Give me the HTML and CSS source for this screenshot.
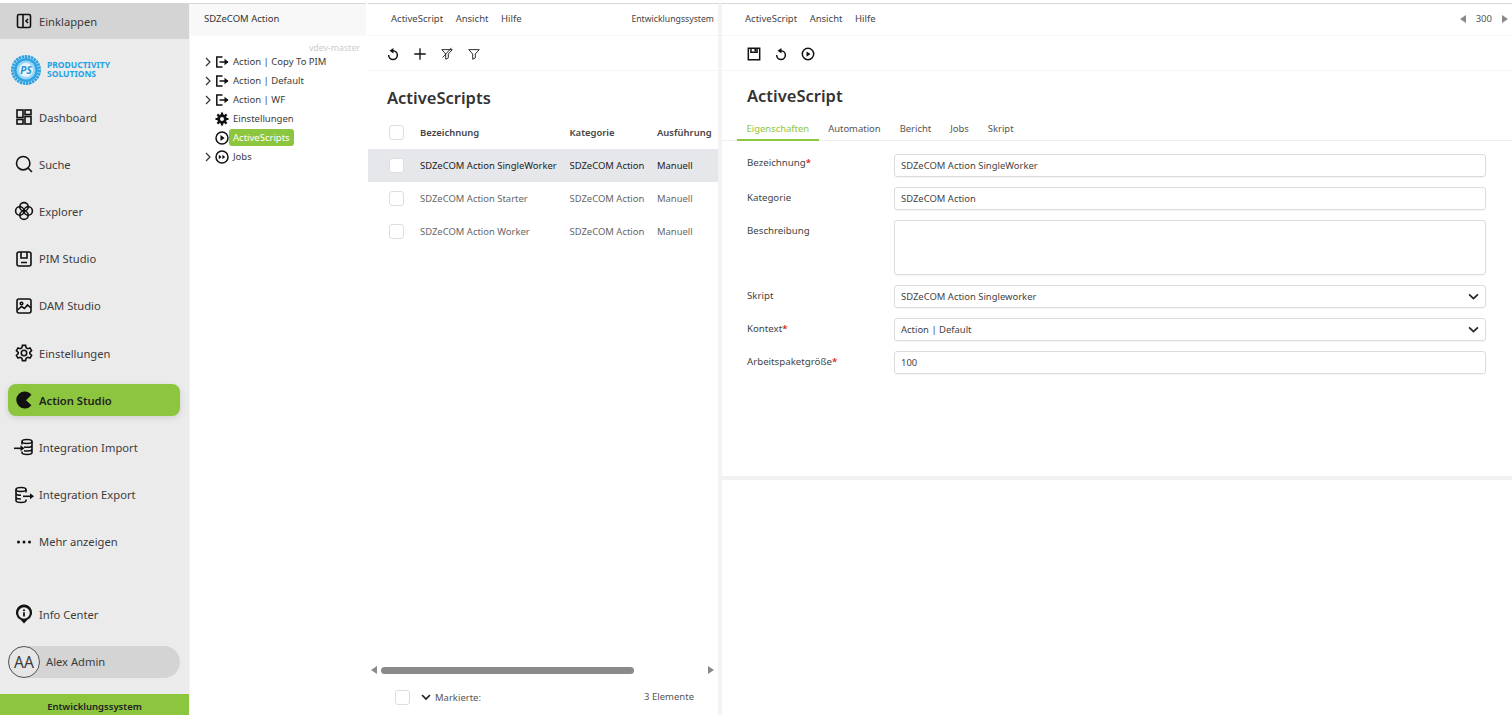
FILE: index.html
```html
<!DOCTYPE html>
<html lang="de">
<head>
<meta charset="utf-8">
<title>Action Studio</title>
<link rel="stylesheet" href="styles.css">
</head>
<body>
<div class="app">
  <aside class="sidebar">
    <div class="collapse">
      <svg class="nav-icon" viewBox="0 0 20 20"><rect x="3.500" y="3.500" width="13" height="13" rx="1.500"/><path d="M9 3.500v13M14 8l-2 2 2 2"/></svg>
      <span>Einklappen</span>
    </div>
    <div class="logo">
      <svg class="logo-mark" viewBox="0 0 30 30"><circle class="logo-edge" cx="15" cy="15" r="13.500"/><circle class="logo-ring" cx="15" cy="15" r="12"/><circle class="logo-mid" cx="15" cy="15" r="9.500"/><circle class="logo-core" cx="15" cy="15" r="7"/><text x="15" y="18.800" text-anchor="middle" class="logo-ps">PS</text></svg>
      <div class="logo-text">PRODUCTIVITY<br>SOLUTIONS</div>
    </div>
    <nav class="nav">
      <a class="nav-item"><svg class="nav-icon" viewBox="0 0 20 20"><rect x="3" y="3" width="6" height="7.500"/><rect x="11" y="3" width="6" height="4.500"/><rect x="3" y="12.500" width="6" height="4.500"/><rect x="11" y="9.500" width="6" height="7.500"/></svg><span>Dashboard</span></a>
      <a class="nav-item"><svg class="nav-icon" viewBox="0 0 20 20"><circle cx="9.200" cy="9.200" r="6.700"/><path d="m14 14 4 4"/></svg><span>Suche</span></a>
      <a class="nav-item"><svg class="nav-icon" viewBox="0 0 20 20"><circle cx="10" cy="5.800" r="4.200"/><circle cx="14.200" cy="10" r="4.200"/><circle cx="10" cy="14.200" r="4.200"/><circle cx="5.800" cy="10" r="4.200"/></svg><span>Explorer</span></a>
      <a class="nav-item"><svg class="nav-icon" viewBox="0 0 20 20"><rect x="3" y="3" width="14" height="14" rx="2"/><path d="M7 3v6h6V3M7 13.500h6"/></svg><span>PIM Studio</span></a>
      <a class="nav-item"><svg class="nav-icon" viewBox="0 0 20 20"><rect x="3" y="3" width="14" height="14" rx="2"/><circle cx="7.500" cy="7.500" r="1.300"/><path d="m3.500 14 4-3.500 3 2 3-3.500 3.500 3"/></svg><span>DAM Studio</span></a>
      <a class="nav-item"><svg class="nav-icon" viewBox="0 0 20 20"><circle cx="10" cy="10" r="2.700"/><path d="M8.400 2.400h3.200l.5 2.400 1.600.9 2.300-.8 1.600 2.800-1.800 1.600v1.400l1.800 1.600-1.600 2.800-2.300-.8-1.600.9-.5 2.400H8.400l-.5-2.400-1.600-.9-2.300.8-1.600-2.800 1.800-1.600V9.300l-1.800-1.600 1.600-2.800 2.300.8 1.600-.9z"/></svg><span>Einstellungen</span></a>
      <a class="nav-item active"><svg class="nav-icon" viewBox="0 0 20 20"><path class="solid" d="M17.500 4.800A8.500 8.500 0 1 0 17.500 15.200L12 10.300z"/></svg><span>Action Studio</span></a>
      <a class="nav-item"><svg class="nav-icon" viewBox="0 0 20 20"><ellipse cx="13" cy="4.500" rx="5" ry="2"/><path d="M8 4.500v3M8 14.500v1c0 1.100 2.200 2 5 2s5-.9 5-2v-11M10 10c1 .2 2 .3 3 .3 2.800 0 5-.9 5-2M10 13.800c1 .2 2 .2 3 .2 2.800 0 5-.9 5-2"/><path d="M0 11.300h9"/><path class="solid" d="m6.500 8.300 4 3-4 3z"/></svg><span>Integration Import</span></a>
      <a class="nav-item"><svg class="nav-icon" viewBox="0 0 20 20"><ellipse cx="7" cy="4.500" rx="5" ry="2"/><path d="M2 4.500v11c0 1.100 2.200 2 5 2s5-.9 5-2v-1M12 4.500v3M2 8.200c0 1.100 2.200 2 5 2M2 12c0 1.100 2.200 2 5 2"/><path d="M9 11.300h8"/><path class="solid" d="m16 8.300 4 3-4 3z"/></svg><span>Integration Export</span></a>
      <a class="nav-item"><svg class="nav-icon" viewBox="0 0 20 20"><circle class="solid" cx="4.500" cy="10" r="1.500"/><circle class="solid" cx="10" cy="10" r="1.500"/><circle class="solid" cx="15.500" cy="10" r="1.500"/></svg><span>Mehr anzeigen</span></a>
    </nav>
    <a class="nav-item info"><svg class="nav-icon" viewBox="0 0 20 20"><path class="solid" d="M10 19.500 6.600 15.800A8 8 0 1 1 13.400 15.800z"/><circle class="hole" cx="10" cy="9" r="5.800"/><circle class="solid" cx="10" cy="6.300" r="1"/><path class="bar" d="M10 8.300v4.200"/></svg><span>Info Center</span></a>
    <div class="user"><div class="avatar">AA</div><span class="user-name">Alex Admin</span></div>
    <div class="env">Entwicklungssystem</div>
  </aside>

  <section class="tree-panel">
    <header class="tree-head">SDZeCOM Action</header>
    <div class="version">vdev-master</div>
    <ul class="tree">
      <li><svg class="chev" viewBox="0 0 10 10"><path d="m3 1 4 4-4 4"/></svg><svg class="tree-icon" viewBox="0 0 14 14"><path d="M7.500 2H1.800v10h5.700M4.500 7h8.500"/><path class="solid" d="m9.500 3.800 4 3.200-4 3.200z"/></svg><span>Action | Copy To PIM</span></li>
      <li><svg class="chev" viewBox="0 0 10 10"><path d="m3 1 4 4-4 4"/></svg><svg class="tree-icon" viewBox="0 0 14 14"><path d="M7.500 2H1.800v10h5.700M4.500 7h8.500"/><path class="solid" d="m9.500 3.800 4 3.200-4 3.200z"/></svg><span>Action | Default</span></li>
      <li><svg class="chev" viewBox="0 0 10 10"><path d="m3 1 4 4-4 4"/></svg><svg class="tree-icon" viewBox="0 0 14 14"><path d="M7.500 2H1.800v10h5.700M4.500 7h8.500"/><path class="solid" d="m9.500 3.800 4 3.200-4 3.200z"/></svg><span>Action | WF</span></li>
      <li class="no-chev"><svg class="tree-icon" viewBox="0 0 14 14"><circle cx="7" cy="7" r="3.400" stroke-width="2.800"/><path d="M7 .5v2.500M7 11v2.500M.5 7H3M11 7h2.500M2.400 2.400l1.800 1.800M9.800 9.800l1.800 1.800M2.400 11.600l1.800-1.800M9.800 4.200l1.800-1.800" stroke-width="2.200"/></svg><span>Einstellungen</span></li>
      <li class="no-chev"><svg class="tree-icon" viewBox="0 0 14 14"><circle cx="7" cy="7" r="6"/><path class="solid" d="m5.500 4 4.200 3-4.200 3z"/></svg><span class="selected">ActiveScripts</span></li>
      <li><svg class="chev" viewBox="0 0 10 10"><path d="m3 1 4 4-4 4"/></svg><svg class="tree-icon" viewBox="0 0 14 14"><circle cx="7" cy="7" r="6"/><path class="solid" d="m3.800 4.800 2.800 2.200-2.800 2.200zM7.400 4.800l2.800 2.200-2.800 2.200z"/></svg><span>Jobs</span></li>
    </ul>
  </section>

  <section class="list-panel">
    <div class="menubar">
      <span>ActiveScript</span><span>Ansicht</span><span>Hilfe</span>
      <span class="menu-right">Entwicklungssystem</span>
    </div>
    <div class="toolbar list-tools">
      <svg class="tool" viewBox="0 0 16 16"><path d="M8 4.200a5 5 0 1 1-5 5"/><path class="solid" d="M8.500 1v6.400L4 4.200z"/></svg>
      <svg class="tool tool-plus" viewBox="0 0 16 16"><path d="M8 1.500v13M1.500 8h13"/></svg>
      <svg class="tool thin" viewBox="0 0 16 16"><path d="M2 3h12L9.500 8v4.500L6.500 14V8zM13 1 3 12"/></svg>
      <svg class="tool thin" viewBox="0 0 16 16"><path d="M2 3h12L9.500 8v4.500L6.500 14V8z"/></svg>
    </div>
    <h1 class="list-title">ActiveScripts</h1>
    <div class="table">
      <div class="row head"><i class="check"></i><span>Bezeichnung</span><span>Kategorie</span><span>Ausführung</span></div>
      <div class="row current"><i class="check"></i><span>SDZeCOM Action SingleWorker</span><span>SDZeCOM Action</span><span>Manuell</span></div>
      <div class="row"><i class="check"></i><span>SDZeCOM Action Starter</span><span>SDZeCOM Action</span><span>Manuell</span></div>
      <div class="row"><i class="check"></i><span>SDZeCOM Action Worker</span><span>SDZeCOM Action</span><span>Manuell</span></div>
    </div>
    <div class="scrollbar">
      <i class="arrow-left"></i><div class="track"><div class="thumb"></div></div><i class="arrow-right"></i>
    </div>
    <div class="list-foot">
      <i class="check"></i>
      <svg class="foot-chev" viewBox="0 0 10 10"><path d="m1 3 4 4 4-4"/></svg>
      <span class="marked">Markierte:</span>
      <span class="count">3 Elemente</span>
    </div>
  </section>

  <section class="detail-panel">
    <div class="menubar detail-menu">
      <span>ActiveScript</span><span>Ansicht</span><span>Hilfe</span>
      <div class="pager"><i class="arrow-left"></i><span>300</span><i class="arrow-right"></i></div>
    </div>
    <div class="toolbar detail-tools">
      <svg class="tool" viewBox="0 0 16 16"><path d="M1.500 1.500h13v13h-13zM4.500 1.500v4.500h7V1.500"/><path class="solid" d="M8.500 2h2v3h-2z"/></svg>
      <svg class="tool" viewBox="0 0 16 16"><path d="M8 4.200a5 5 0 1 1-5 5"/><path class="solid" d="M8.500 1v6.400L4 4.200z"/></svg>
      <svg class="tool" viewBox="0 0 16 16"><circle cx="8" cy="8" r="6.500"/><path class="solid" d="m6.300 5 4.600 3-4.600 3z"/></svg>
    </div>
    <h2 class="detail-title">ActiveScript</h2>
    <div class="tabs">
      <span class="tab on">Eigenschaften</span><span class="tab">Automation</span><span class="tab">Bericht</span><span class="tab">Jobs</span><span class="tab">Skript</span>
    </div>
    <form class="form">
      <label class="up">Bezeichnung<b>*</b></label><div class="field">SDZeCOM Action SingleWorker</div>
      <label>Kategorie</label><div class="field">SDZeCOM Action</div>
      <label>Beschreibung</label><div class="field area"></div>
      <label>Skript</label><div class="field select">SDZeCOM Action Singleworker<svg viewBox="0 0 10 10"><path d="m1 3 4 4 4-4"/></svg></div>
      <label>Kontext<b>*</b></label><div class="field select">Action | Default<svg viewBox="0 0 10 10"><path d="m1 3 4 4 4-4"/></svg></div>
      <label>Arbeitspaketgröße<b>*</b></label><div class="field">100</div>
    </form>
  </section>
</div>
</body>
</html>
```
FILE: styles.css
```css
* { box-sizing: border-box; }
html, body { margin: 0; height: 100%; overflow: hidden; background: #fff; }
body { font-family: "Noto Sans", "Open Sans", sans-serif; color: #3b3b3b; }
svg { display: block; fill: none; stroke: #111; stroke-width: 1.6; flex: none; }
svg .solid { fill: #111; stroke: none; }
i { display: block; }

.app { height: 715px; padding-top: 3px; display: flex; }
.app > section, .sidebar { border-top: 1px solid #d6d6d6; }

.sidebar { width: 190px; flex: none; background: #ebebeb; border-right: 1px solid #f4f4f4; display: flex; flex-direction: column; }
.collapse { height: 35px; background: #d4d4d4; display: flex; align-items: center; padding: 0 0 1px 14px; gap: 5px; font-size: 11.200px; }
.nav-icon { width: 20px; height: 20px; }
.logo { height: 54.500px; padding: 7px 0 0 11px; display: flex; align-items: center; gap: 6px; }
.logo-mark { width: 30px; height: 30px; stroke: none; }
.logo-edge { fill: none; stroke: #2ea3e3; stroke-width: 3; stroke-dasharray: 2.500 .6; }
.logo-ring { fill: #2ea3e3; stroke: none; }
.logo-mid { fill: #9bd6f5; stroke: none; }
.logo-core { fill: #e6f5fd; stroke: none; }
.logo-ps { font: italic 700 10px "Noto Sans", sans-serif; fill: #2490d3; stroke: none; }
.logo-text { font-size: 8.500px; line-height: 8.500px; font-weight: 700; color: #22a3e4; }
.nav { flex: 1; }
.nav-item { height: 47.200px; display: flex; align-items: center; padding-left: 14px; gap: 5px; font-size: 11.200px; color: #3c3c3c; }
.nav-item.active { height: 32px; margin: 7.600px 9px 7.600px 8px; padding-left: 6px; background: #8cc63e; border-radius: 8px; box-shadow: 0 2px 6px rgba(0,0,0,.12); font-weight: 600; color: #222; }
.nav-item .hole { fill: #ebebeb; stroke: none; }
.nav-item .bar { stroke: #111; stroke-width: 1.800; }
.info { margin-bottom: 8px; }
.user { height: 32px; margin: 0 9px 16px 8px; border-radius: 16px; background: #d4d4d4; display: flex; align-items: center; gap: 6px; font-size: 11.200px; }
.user-name { margin-top: -2px; }
.avatar { width: 32px; height: 32px; flex: none; border: 1px solid #555; border-radius: 50%; display: flex; align-items: center; justify-content: center; font-size: 15.500px; background: #e6e6e6; }
.env { height: 21px; background: #8cc63e; text-align: center; font-size: 9.500px; font-weight: 600; line-height: 26px; color: #222; }

.tree-panel { width: 176px; flex: none; margin-right: 2px; display: flex; flex-direction: column; }
.tree-head { height: 32px; background: #f8f8f8; font-size: 9.500px; padding: 0 14px; line-height: 30px; color: #333; }
.version { font-size: 8.800px; color: #ccc; text-align: right; padding: 6px 6px 0 0; height: 16px; line-height: 12px; }
.tree { list-style: none; margin: 0; padding: 0 0 0 13px; font-size: 9.500px; }
.tree li { height: 19px; display: flex; align-items: center; }
.tree li.no-chev { padding-left: 12px; }
.chev { width: 10px; height: 10px; margin-right: 2px; stroke: #333; stroke-width: 1.200; }
.tree-icon { width: 14px; height: 14px; margin-right: 4px; stroke-width: 1.500; }
.selected { background: #8cc63e; color: #fff; border-radius: 3px; height: 17px; line-height: 17px; padding: 0 4px; margin-left: -4px; }

.list-panel { width: 352px; flex: none; border-right: 2px solid #f3f3f3; display: flex; flex-direction: column; }
.menubar { height: 32px; flex: none; display: flex; align-items: center; gap: 12.500px; padding: 0 4px 2px 23px; font-size: 9.500px; border-bottom: 1px solid #f7f7f7; color: #444; }
.menu-right { margin-left: auto; font-size: 8.700px; }
.toolbar { height: 35px; flex: none; display: flex; align-items: center; padding-top: 1px; border-bottom: 1px solid #f5f5f5; }
.tool { width: 14px; height: 14px; stroke-width: 1.700; }
.tool.thin { stroke-width: 1; }
.tool-plus { stroke-width: 1.500; }
.list-tools { padding-left: 18px; gap: 13px; }
.list-title { margin: 15px 0 0 19px; font-size: 16.500px; line-height: 23px; font-weight: 600; color: #333; height: 36px; }
.table { flex: 1; font-size: 9.450px; }
.row { height: 33px; display: grid; grid-template-columns: 52px 149.500px 87.500px 1fr; align-items: center; white-space: nowrap; color: #666; }
.row .check { margin-left: 21px; }
.row.head { height: 27px; padding-bottom: 7px; font-weight: 600; color: #444; }
.row.current { background: #e6e7ea; color: #222; }
.check { width: 15px; height: 15px; background: #fff; border: 1px solid #dedede; border-radius: 3px; }
.scrollbar { height: 8px; flex: none; margin-bottom: 12px; display: flex; align-items: center; padding: 0 4px 0 3px; gap: 4px; }
.track { flex: 1; }
.thumb { width: 253px; height: 7px; background: #8a8a8a; border-radius: 4px; }
.arrow-left { width: 0; height: 0; border: 4px solid transparent; border-left: 0; border-right: 6px solid #8a8a8a; }
.arrow-right { width: 0; height: 0; border: 4px solid transparent; border-right: 0; border-left: 6px solid #8a8a8a; }
.list-foot { height: 29px; flex: none; display: flex; align-items: center; padding: 0 24px 7px 27px; font-size: 9.500px; color: #555; }
.foot-chev { width: 10px; height: 10px; margin: 0 4px 0 11px; stroke: #222; stroke-width: 1.700; }
.count { margin-left: auto; margin-top: -2px; }

.detail-panel { flex: 1; border-left: 2px solid #f3f3f3; min-width: 0; display: flex; flex-direction: column; }
.pager { margin-left: auto; display: flex; align-items: center; gap: 10px; color: #555; }
.detail-tools { padding-left: 25px; gap: 13px; }
.detail-title { margin: 13px 0 0 25px; font-size: 16.500px; line-height: 23px; font-weight: 600; color: #333; height: 36px; }
.tabs { height: 21px; flex: none; display: flex; padding-left: 15px; border-bottom: 1px solid #eee; font-size: 9.450px; color: #555; }
.tab { padding: 0 9.500px; line-height: 17px; height: 21px; }
.tab.on { color: #8cc63e; border-bottom: 2px solid #8cc63e; }
.form { display: grid; grid-template-columns: 147px 592px; grid-auto-rows: min-content; row-gap: 10px; padding: 13px 0 0 25px; height: 339px; border-bottom: 4px solid #f2f2f2; font-size: 9.450px; }
.form label { line-height: 21px; color: #444; font-size: 9.700px; }
.form label.up { margin-top: -2px; }
.form b { color: #e02020; font-weight: 600; }
.field { height: 23px; border: 1px solid #dcdcdc; border-radius: 3px; padding: 0 6px; display: flex; align-items: center; justify-content: space-between; color: #444; box-shadow: 0 1px 1px rgba(0,0,0,.04); }
.area { height: 55px; }
.select svg { width: 11px; height: 11px; stroke-width: 1.500; stroke: #222; }
```
